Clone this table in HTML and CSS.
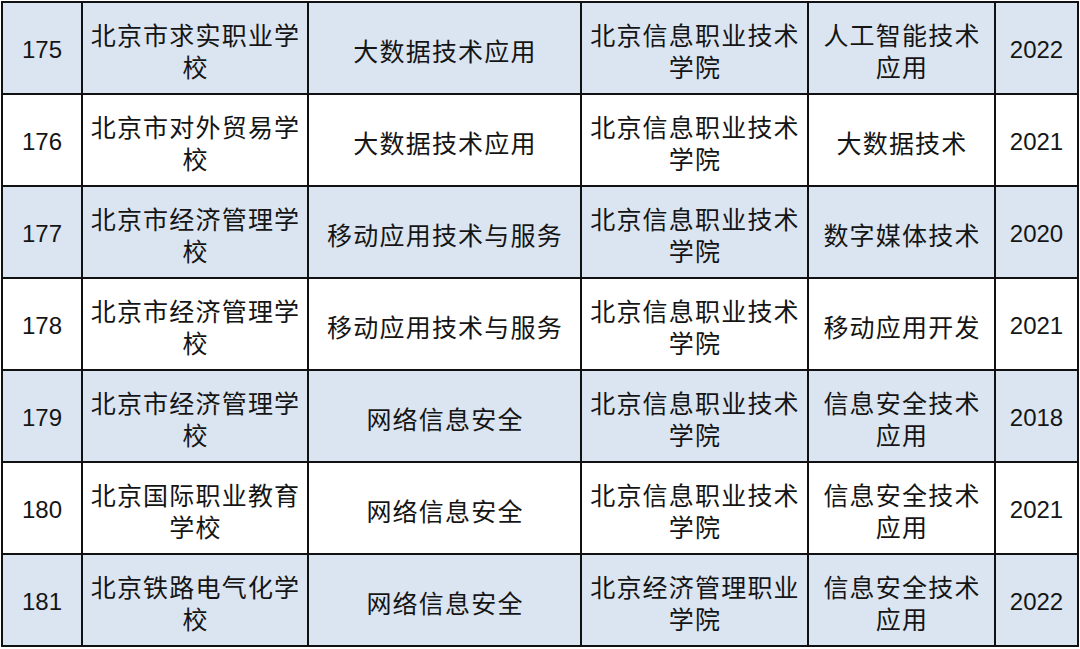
FILE: index.html
```html
<!DOCTYPE html>
<html lang="zh-CN">
<head>
<meta charset="utf-8">
<link rel="stylesheet" href="styles.css">
</head>
<body>
<table class="grid">
  <colgroup>
    <col class="c1"><col class="c2"><col class="c3"><col class="c4"><col class="c5"><col class="c6">
  </colgroup>
  <tbody>
    <tr class="alt">
      <td class="num">175</td>
      <td class="zh"><span class="ln">北京市求实职业学</span><span class="ln">校</span></td>
      <td class="zh"><span class="ln">大数据技术应用</span></td>
      <td class="zh"><span class="ln">北京信息职业技术</span><span class="ln">学院</span></td>
      <td class="zh"><span class="ln">人工智能技术</span><span class="ln">应用</span></td>
      <td class="num">2022</td>
    </tr>
    <tr>
      <td class="num">176</td>
      <td class="zh"><span class="ln">北京市对外贸易学</span><span class="ln">校</span></td>
      <td class="zh"><span class="ln">大数据技术应用</span></td>
      <td class="zh"><span class="ln">北京信息职业技术</span><span class="ln">学院</span></td>
      <td class="zh"><span class="ln">大数据技术</span></td>
      <td class="num">2021</td>
    </tr>
    <tr class="alt">
      <td class="num">177</td>
      <td class="zh"><span class="ln">北京市经济管理学</span><span class="ln">校</span></td>
      <td class="zh"><span class="ln">移动应用技术与服务</span></td>
      <td class="zh"><span class="ln">北京信息职业技术</span><span class="ln">学院</span></td>
      <td class="zh"><span class="ln">数字媒体技术</span></td>
      <td class="num">2020</td>
    </tr>
    <tr>
      <td class="num">178</td>
      <td class="zh"><span class="ln">北京市经济管理学</span><span class="ln">校</span></td>
      <td class="zh"><span class="ln">移动应用技术与服务</span></td>
      <td class="zh"><span class="ln">北京信息职业技术</span><span class="ln">学院</span></td>
      <td class="zh"><span class="ln">移动应用开发</span></td>
      <td class="num">2021</td>
    </tr>
    <tr class="alt">
      <td class="num">179</td>
      <td class="zh"><span class="ln">北京市经济管理学</span><span class="ln">校</span></td>
      <td class="zh"><span class="ln">网络信息安全</span></td>
      <td class="zh"><span class="ln">北京信息职业技术</span><span class="ln">学院</span></td>
      <td class="zh"><span class="ln">信息安全技术</span><span class="ln">应用</span></td>
      <td class="num">2018</td>
    </tr>
    <tr>
      <td class="num">180</td>
      <td class="zh"><span class="ln">北京国际职业教育</span><span class="ln">学校</span></td>
      <td class="zh"><span class="ln">网络信息安全</span></td>
      <td class="zh"><span class="ln">北京信息职业技术</span><span class="ln">学院</span></td>
      <td class="zh"><span class="ln">信息安全技术</span><span class="ln">应用</span></td>
      <td class="num">2021</td>
    </tr>
    <tr class="alt">
      <td class="num">181</td>
      <td class="zh"><span class="ln">北京铁路电气化学</span><span class="ln">校</span></td>
      <td class="zh"><span class="ln">网络信息安全</span></td>
      <td class="zh"><span class="ln">北京经济管理职业</span><span class="ln">学院</span></td>
      <td class="zh"><span class="ln">信息安全技术</span><span class="ln">应用</span></td>
      <td class="num">2022</td>
    </tr>
  </tbody>
</table>
</body>
</html>
```

FILE: styles.css
```css
html, body {
  margin: 0;
  padding: 0;
  background: #ffffff;
}

.grid {
  margin: 1px 0 0 1px;
  border-collapse: separate;
  border-spacing: 0;
  table-layout: fixed;
  width: 1078px;
  border-top: 2px solid #111111;
  border-left: 2px solid #111111;
  color: #151515;
}

.c1 { width: 80px; }
.c2 { width: 226px; }
.c3 { width: 273px; }
.c4 { width: 227px; }
.c5 { width: 187px; }
.c6 { width: 83px; }

.grid td {
  box-sizing: border-box;
  height: 92px;
  padding: 3px 0 0 0;
  border-right: 2px solid #111111;
  border-bottom: 2px solid #111111;
  text-align: center;
  vertical-align: middle;
}

.grid tr.alt td {
  background: #dbe5f1;
}

.num {
  font-family: "Liberation Sans", Arial, sans-serif;
  font-size: 24px;
  line-height: 32px;
}

.zh {
  font-family: "Noto Sans CJK SC", "Liberation Sans", sans-serif;
  font-size: 25px;
  letter-spacing: 1.2px;
  padding-left: 1px !important;
}

.ln {
  display: block;
  height: 32px;
  line-height: 32px;
  white-space: nowrap;
}
```
